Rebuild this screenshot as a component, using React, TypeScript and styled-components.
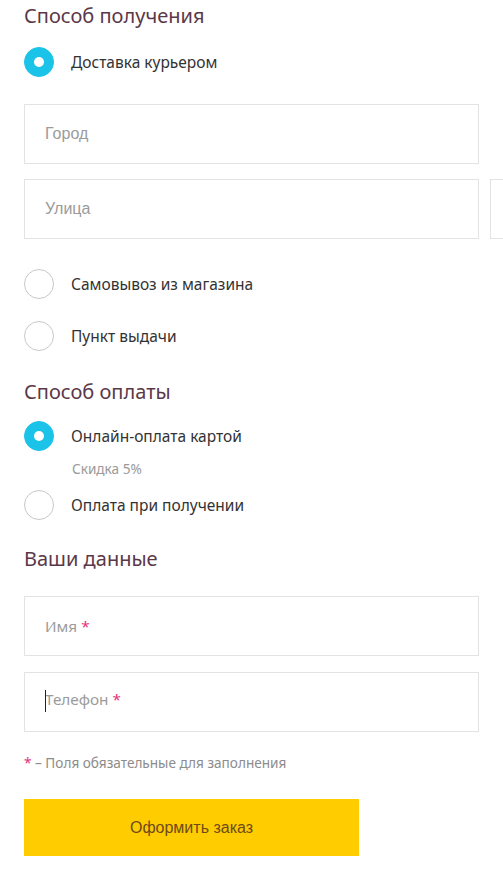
import React from "react";
import styled, { createGlobalStyle } from "styled-components";

const Global = createGlobalStyle`
  html, body { margin: 0; padding: 0; background: #fff; overflow: hidden; }
  body { font-family: "Noto Sans", "Open Sans", sans-serif; }
  * { box-sizing: border-box; }
`;

const Page = styled.div`
  width: 503px;
  height: 870px;
  overflow: hidden;
  padding-left: 24px;
`;

const Heading = styled.h2<{ $top: number; $bottom: number }>`
  margin: ${(p) => p.$top}px 0 ${(p) => p.$bottom}px;
  height: 32px;
  line-height: 32px;
  font-size: 20px;
  font-weight: 400;
  color: #5b3848;
  white-space: nowrap;
`;

const RadioRow = styled.label<{ $bottom: number }>`
  display: flex;
  align-items: center;
  gap: 17px;
  height: 30px;
  margin-bottom: ${(p) => p.$bottom}px;
  cursor: pointer;
`;

const Circle = styled.span<{ $on?: boolean }>`
  flex: none;
  width: 30px;
  height: 30px;
  border-radius: 50%;
  background: ${(p) => (p.$on ? "#1cc3e8" : "#fff")};
  border: 1px solid ${(p) => (p.$on ? "#1cc3e8" : "#c8c8c8")};
  display: flex;
  align-items: center;
  justify-content: center;
  &::after {
    content: "";
    display: ${(p) => (p.$on ? "block" : "none")};
    width: 10px;
    height: 10px;
    border-radius: 50%;
    background: #fff;
  }
`;

const RadioText = styled.span`
  font-size: 15.5px;
  color: #333;
  white-space: nowrap;
`;

const Hint = styled.div`
  margin: 0 0 13px 48px;
  height: 16px;
  line-height: 16px;
  font-size: 13.6px;
  color: #9a9a9a;
`;

const FieldRow = styled.div<{ $bottom: number }>`
  display: flex;
  gap: 11px;
  margin-bottom: ${(p) => p.$bottom}px;
`;

const Field = styled.div<{ $width: number }>`
  position: relative;
  flex: none;
  width: ${(p) => p.$width}px;
  height: 60px;
  border: 1px solid #e3e3e3;
  background: #fff;
`;

const Input = styled.input`
  width: 100%;
  height: 100%;
  border: none;
  outline: none;
  padding: 0 20px;
  font-family: "Liberation Sans", Arial, sans-serif;
  font-size: 16px;
  color: #333;
  background: transparent;
  &::placeholder { color: #9b9b9b; }
`;

const FloatLabel = styled.span<{ $shift?: number }>`
  position: absolute;
  left: 20px;
  top: ${(p) => p.$shift ?? 0}px;
  height: 100%;
  display: flex;
  align-items: center;
  font-size: 15.3px;
  color: #9b9b9b;
  pointer-events: none;
`;

const Star = styled.span`
  color: #e2317a;
  margin-left: 4px;
`;

const Caret = styled.span`
  position: absolute;
  left: 20px;
  top: 17px;
  width: 1px;
  height: 22px;
  background: #222;
`;

const Note = styled.div`
  margin: 22px 0 27px;
  height: 18px;
  line-height: 18px;
  font-size: 13.6px;
  color: #8c8c8c;
  white-space: nowrap;
`;

const NoteStar = styled.span`
  color: #e2317a;
`;

const Submit = styled.button`
  display: block;
  width: 335px;
  height: 57px;
  border: none;
  background: #ffcc00;
  color: #6e4a1c;
  font-family: "Liberation Sans", Arial, sans-serif;
  font-size: 16px;
  cursor: pointer;
`;

export default function App() {
  return (
    <Page>
      <Global />
      <Heading $top={0} $bottom={15}>Способ получения</Heading>
      <RadioRow $bottom={27}>
        <Circle $on />
        <RadioText>Доставка курьером</RadioText>
      </RadioRow>
      <FieldRow $bottom={15}>
        <Field $width={455}>
          <Input placeholder="Город" />
        </Field>
      </FieldRow>
      <FieldRow $bottom={30}>
        <Field $width={455}>
          <Input placeholder="Улица" />
        </Field>
        <Field $width={120}>
          <Input placeholder="Дом" />
        </Field>
      </FieldRow>
      <RadioRow $bottom={22}>
        <Circle />
        <RadioText>Самовывоз из магазина</RadioText>
      </RadioRow>
      <RadioRow $bottom={0}>
        <Circle />
        <RadioText>Пункт выдачи</RadioText>
      </RadioRow>
      <Heading $top={25} $bottom={13}>Способ оплаты</Heading>
      <RadioRow $bottom={10}>
        <Circle $on />
        <RadioText>Онлайн-оплата картой</RadioText>
      </RadioRow>
      <Hint>Скидка 5%</Hint>
      <RadioRow $bottom={0}>
        <Circle />
        <RadioText>Оплата при получении</RadioText>
      </RadioRow>
      <Heading $top={23} $bottom={21}>Ваши данные</Heading>
      <FieldRow $bottom={16}>
        <Field $width={455}>
          <Input aria-label="Имя" />
          <FloatLabel>
            Имя<Star>*</Star>
          </FloatLabel>
        </Field>
      </FieldRow>
      <FieldRow $bottom={0}>
        <Field $width={455}>
          <Input aria-label="Телефон" />
          <FloatLabel $shift={-3}>
            Телефон<Star>*</Star>
          </FloatLabel>
          <Caret />
        </Field>
      </FieldRow>
      <Note>
        <NoteStar>*</NoteStar> – Поля обязательные для заполнения
      </Note>
      <Submit>Оформить заказ</Submit>
    </Page>
  );
}
